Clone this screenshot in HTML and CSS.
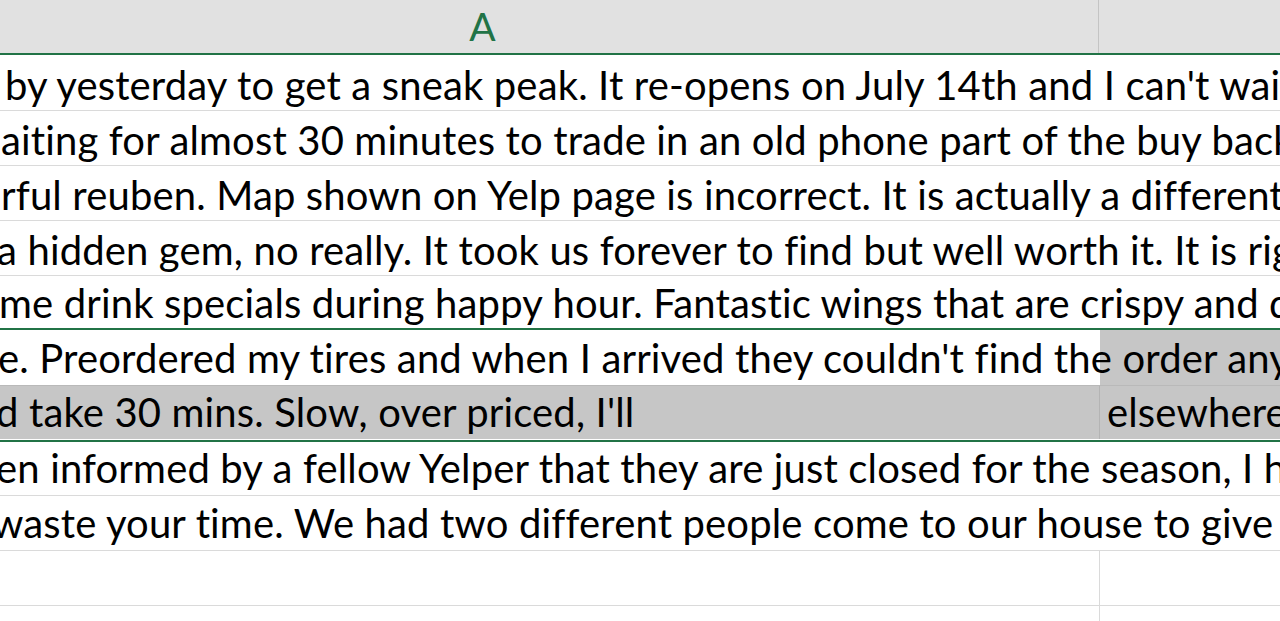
FILE: index.html
```html
<!DOCTYPE html>
<html>
<head>
<meta charset="utf-8">
<link rel="stylesheet" href="styles.css">
</head>
<body>
<div class="sheet">
  <div class="head">
    <div class="hcell hcell-a"><span class="hlabel">A</span></div>
    <div class="hcell hcell-b"></div>
  </div>
  <div class="row r1"><div class="cell a"><span class="t">by yesterday to get a sneak peak. It re-opens on July 14th and I can't wait</span></div><div class="cell b over"></div></div>
  <div class="row r2"><div class="cell a"><span class="t">aiting for almost 30 minutes to trade in an old phone part of the buy back</span></div><div class="cell b over"></div></div>
  <div class="row r3"><div class="cell a"><span class="t">rful reuben. Map shown on Yelp page is incorrect. It is actually a different</span></div><div class="cell b over"></div></div>
  <div class="row r4"><div class="cell a"><span class="t">a hidden gem, no really. It took us forever to find but well worth it. It is right</span></div><div class="cell b over"></div></div>
  <div class="row r5"><div class="cell a"><span class="t">me drink specials during happy hour. Fantastic wings that are crispy and d</span></div><div class="cell b over"></div></div>
  <div class="row r6"><div class="cell a"><span class="t">e. Preordered my tires and when I arrived they couldn't find the order any</span></div><div class="cell b over"></div></div>
  <div class="row r7 sel"><div class="cell a clip"><span class="t">d take 30 mins. Slow, over priced, I'll</span></div><div class="cell b"><span class="tb">elsewhere</span></div></div>
  <div class="row r8"><div class="cell a"><span class="t">en informed by a fellow Yelper that they are just closed for the season, I h</span></div><div class="cell b over"></div></div>
  <div class="row r9"><div class="cell a"><span class="t">waste your time. We had two different people come to our house to give us</span></div><div class="cell b over"></div></div>
  <div class="row r10"><div class="cell a"></div><div class="cell b"></div></div>
  <div class="row r11"><div class="cell a"></div><div class="cell b"></div></div>
</div>
</body>
</html>
```

FILE: styles.css
```css
html, body {
  margin: 0;
  padding: 0;
  background: #ffffff;
}
body {
  width: 1280px;
  height: 621px;
  overflow: hidden;
  font-family: Lato, "Open Sans", sans-serif;
}
.sheet {
  width: 1280px;
  height: 621px;
  overflow: hidden;
}
.head {
  display: grid;
  grid-template-columns: 1099px 1fr;
  height: 53px;
  background: #e1e1e1;
  border-bottom: 2px solid #217346;
  margin-bottom: 1px;
}
.hcell {
  display: flex;
  justify-content: center;
  align-items: flex-end;
}
.hcell-a {
  border-right: 1px solid #c4c4c4;
}
.hlabel {
  color: #217346;
  font-size: 39px;
  line-height: 1;
  padding-bottom: 7px;
  margin-left: -133px;
}
.row {
  display: grid;
  grid-template-columns: 1099px 1fr;
  border-bottom: 1px solid #dadada;
  white-space: nowrap;
  overflow: hidden;
  font-size: 40px;
  letter-spacing: 0.15px;
  line-height: 1;
  color: #000;
}
.cell {
  display: flex;
  align-items: flex-end;
  padding-bottom: 5px;
}
.cell.a.clip {
  overflow: hidden;
}
.cell.b {
  border-left: 1px solid #dadada;
}
.cell.b.over {
  border-left-color: transparent;
}
.t {
  display: block;
}
.r1, .r2, .r3, .r4 { height: 54px; }
.r5 { height: 52px; border-bottom: 2px solid #217346; }
.r6 {
  height: 55px;
  border-bottom-color: #b9b9b9;
  background: linear-gradient(to right, #ffffff 1100px, #c6c6c6 1100px);
}
.r6 .cell, .r7 .cell, .r8 .cell, .r9 .cell { padding-bottom: 7px; }
.r7 { height: 53px; border-bottom: 1px solid #ffffff; }
.r7 .cell.b { border-left-color: #b4b4b4; }
.r8 { height: 53px; border-top: 2px solid #217346; }
.r9, .r10 { height: 54px; }
.r11 { height: 20px; }
.sel { background: #c6c6c6; }
.r1 .t { margin-left: 5px; }
.r2 .t { margin-left: 1px; }
.r3 .t { margin-left: 1px; }
.r4 .t { margin-left: -3px; }
.r5 .t { margin-left: -1px; }
.r6 .t { margin-left: -2px; }
.r7 .t { margin-left: -4px; }
.r8 .t { margin-left: -4px; }
.r9 .t { margin-left: -8px; }
.tb { margin-left: 7px; }
```
